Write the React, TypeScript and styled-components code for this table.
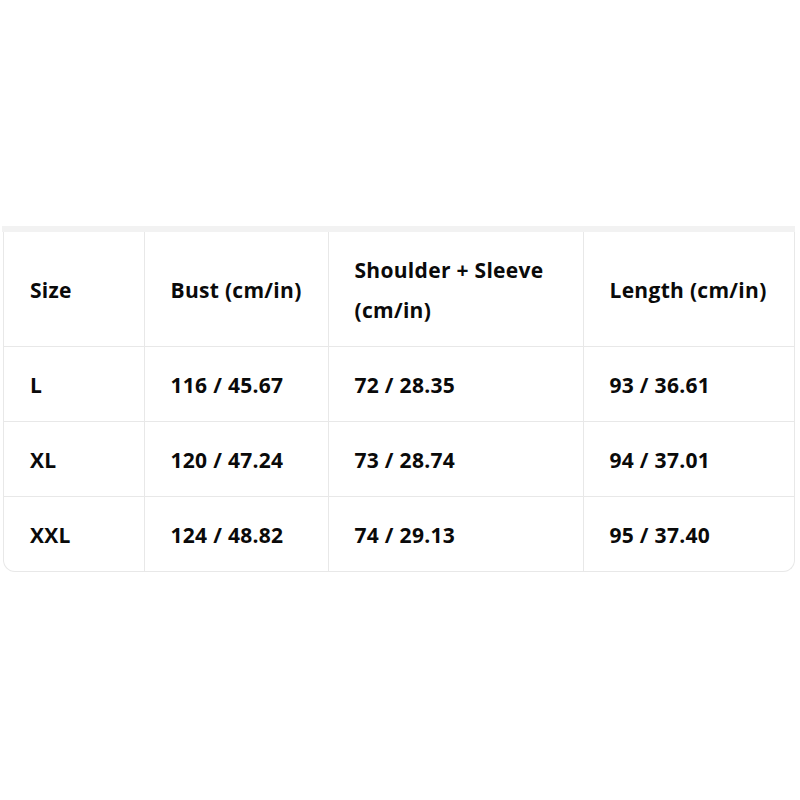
import styled, { createGlobalStyle } from "styled-components";

const GlobalStyle = createGlobalStyle`
  html, body {
    margin: 0;
    padding: 0;
    background: #ffffff;
  }
  body {
    font-family: "Open Sans", "Noto Sans", sans-serif;
  }
`;

const Page = styled.div`
  width: 800px;
  height: 800px;
  display: flex;
  flex-direction: column;
  padding: 226px 5px 0 2px;
  box-sizing: border-box;
`;

const Wrapper = styled.div`
  border-top: 6px solid #f2f2f2;
`;

const Card = styled.div`
  margin-left: 1px;
  border: 1px solid #e8e8e8;
  border-top: none;
  border-radius: 0 0 12px 12px;
  overflow: hidden;
`;

const Table = styled.table`
  width: 100%;
  border-collapse: collapse;
  table-layout: fixed;
  color: #0a0a0a;
`;

const Cell = styled.td`
  padding: 18px 0 16px 26px;
  font-size: 21px;
  font-weight: 700;
  letter-spacing: 0.3px;
  line-height: 40px;
  text-align: left;
  vertical-align: middle;
  border-right: 1px solid #e8e8e8;
  border-bottom: 1px solid #e8e8e8;
  &:last-child {
    border-right: none;
  }
  tr:last-child > & {
    border-bottom: none;
  }
`;

const HEADERS = ["Size", "Bust (cm/in)", "Shoulder + Sleeve (cm/in)", "Length (cm/in)"];
const WIDTHS = [140, 184, 255, 212];

const ROWS = [
  ["L", "116 / 45.67", "72 / 28.35", "93 / 36.61"],
  ["XL", "120 / 47.24", "73 / 28.74", "94 / 37.01"],
  ["XXL", "124 / 48.82", "74 / 29.13", "95 / 37.40"],
];

const App = () => {
  return (
    <>
      <GlobalStyle />
      <Page>
        <Wrapper>
          <Card>
            <Table>
              <colgroup>
                {WIDTHS.map((w, i) => (
                  <col key={i} style={{ width: w }} />
                ))}
              </colgroup>
              <tbody>
                <tr>
                  {HEADERS.map((h) => (
                    <Cell key={h}>{h}</Cell>
                  ))}
                </tr>
                {ROWS.map((r) => (
                  <tr key={r[0]}>
                    {r.map((c, i) => (
                      <Cell key={i}>{c}</Cell>
                    ))}
                  </tr>
                ))}
              </tbody>
            </Table>
          </Card>
        </Wrapper>
      </Page>
    </>
  );
};

export default App;
